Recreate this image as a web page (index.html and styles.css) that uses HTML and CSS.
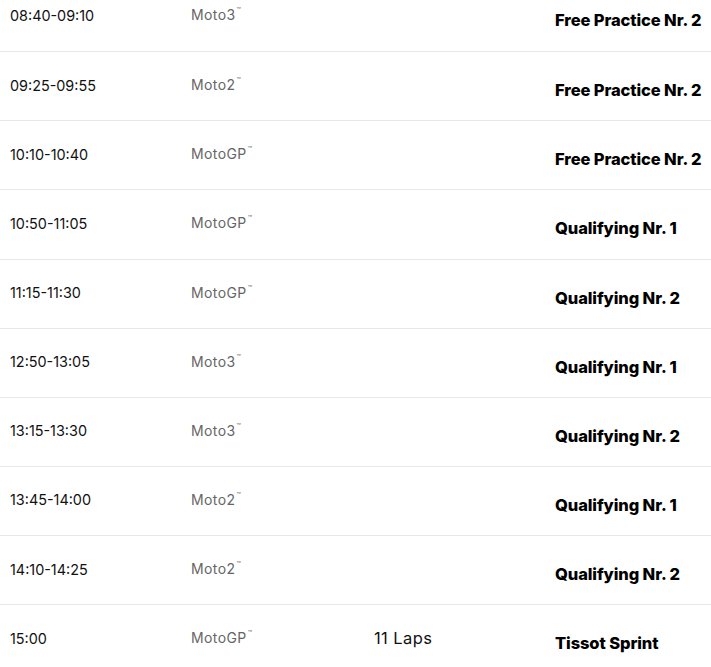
FILE: index.html
```html
<!DOCTYPE html>
<html>
<head>
<meta charset="utf-8">
<link rel="stylesheet" href="styles.css">
</head>
<body>
<div class="schedule">
  <div class="row"><div class="time">08:40-09:10</div><div class="cls">Moto3<sup>™</sup></div><div class="laps"></div><div class="title">Free Practice Nr. 2</div></div>
  <div class="row"><div class="time">09:25-09:55</div><div class="cls">Moto2<sup>™</sup></div><div class="laps"></div><div class="title">Free Practice Nr. 2</div></div>
  <div class="row"><div class="time">10:10-10:40</div><div class="cls">MotoGP<sup>™</sup></div><div class="laps"></div><div class="title">Free Practice Nr. 2</div></div>
  <div class="row"><div class="time">10:50-11:05</div><div class="cls">MotoGP<sup>™</sup></div><div class="laps"></div><div class="title">Qualifying Nr. 1</div></div>
  <div class="row"><div class="time">11:15-11:30</div><div class="cls">MotoGP<sup>™</sup></div><div class="laps"></div><div class="title">Qualifying Nr. 2</div></div>
  <div class="row"><div class="time">12:50-13:05</div><div class="cls">Moto3<sup>™</sup></div><div class="laps"></div><div class="title">Qualifying Nr. 1</div></div>
  <div class="row"><div class="time">13:15-13:30</div><div class="cls">Moto3<sup>™</sup></div><div class="laps"></div><div class="title">Qualifying Nr. 2</div></div>
  <div class="row"><div class="time">13:45-14:00</div><div class="cls">Moto2<sup>™</sup></div><div class="laps"></div><div class="title">Qualifying Nr. 1</div></div>
  <div class="row"><div class="time">14:10-14:25</div><div class="cls">Moto2<sup>™</sup></div><div class="laps"></div><div class="title">Qualifying Nr. 2</div></div>
  <div class="row"><div class="time">15:00</div><div class="cls">MotoGP<sup>™</sup></div><div class="laps">11 Laps</div><div class="title">Tissot Sprint</div></div>
</div>
</body>
</html>
```
FILE: styles.css
```css
html, body {
  margin: 0;
  padding: 0;
  background: #fff;
  overflow: hidden;
}
body {
  font-family: "Inter", "Liberation Sans", sans-serif;
  color: #111;
}
.schedule {
  margin-top: -17.9px;
}
.row {
  display: grid;
  grid-template-columns: 181px 183px 181px 1fr;
  height: 69.125px;
  box-sizing: border-box;
  border-top: 1px solid #e8e8e8;
  padding-left: 10px;
}
.row:first-child {
  border-top: none;
}
.time {
  font-size: 14.4px;
  padding-top: 24.5px;
  line-height: 18px;
  color: #111;
}
.cls {
  font-size: 14px;
  letter-spacing: 0.4px;
  padding-top: 25px;
  line-height: 16px;
  color: #666;
}
.cls sup {
  font-size: 7px;
  vertical-align: top;
  line-height: 8px;
  position: relative;
  top: 0;
  margin-left: 1px;
}
.laps {
  font-size: 16.5px;
  letter-spacing: 0.4px;
  padding-top: 23.5px;
  line-height: 18px;
  color: #111;
}
.title {
  font-size: 16.5px;
  font-weight: 800;
  letter-spacing: -0.1px;
  padding-top: 28px;
  line-height: 20px;
  color: #000;
}
```
